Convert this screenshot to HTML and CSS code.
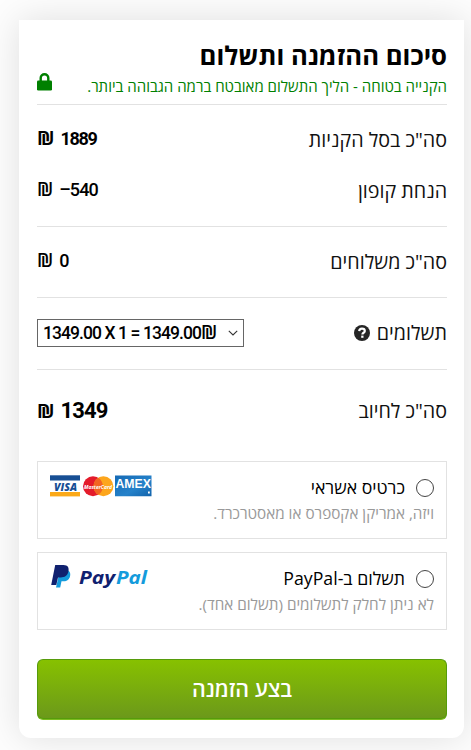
FILE: index.html
```html
<!DOCTYPE html>
<html lang="he" dir="rtl">
<head>
<meta charset="utf-8">
<title>סיכום ההזמנה ותשלום</title>
<link rel="stylesheet" href="styles.css">
</head>
<body>
<main class="card">
  <header class="head">
    <h1>סיכום ההזמנה ותשלום</h1>
    <div class="secure">
      <span>הקנייה בטוחה - הליך התשלום מאובטח ברמה הגבוהה ביותר.</span>
      <svg class="lock" viewBox="0 0 15 18"><path d="M3.700 8V5a3.800 3.800 0 0 1 7.600 0v3" fill="none" stroke="#008000" stroke-width="2.400"/><rect x="0" y="7.500" width="15" height="10" rx="1.300" fill="#008000"/></svg>
    </div>
  </header>
  <section class="group sums">
    <div class="row"><span>סה"כ בסל הקניות</span><span class="price bold" dir="ltr"><i>₪</i> <b>1889</b></span></div>
    <div class="row"><span>הנחת קופון</span><span class="price" dir="ltr"><i>₪</i> <b>–540</b></span></div>
  </section>
  <section class="group shipping"><div class="row"><span>סה"כ משלוחים</span><span class="price" dir="ltr"><i>₪</i> <b>0</b></span></div></section>
  <section class="group payments">
    <div class="row">
      <span class="label"><span>תשלומים</span><svg class="help" viewBox="0 0 16 16"><circle cx="8" cy="8" r="8" fill="#252525"/><path d="M5.200 6.100C5.300 4.400 6.500 3.600 8 3.600c1.700 0 2.800.9 2.800 2.300 0 1.900-2.400 1.800-2.400 3.500" fill="none" stroke="#fff" stroke-width="2.200"/><rect x="7.200" y="10.600" width="2.300" height="2.200" fill="#fff"/></svg></span>
      <div class="select" dir="ltr"><span>1349.00 X 1 = 1349.00<i>₪</i></span><svg class="chev" viewBox="0 0 10 6"><path d="M.8.8 5 5 9.200.8" fill="none" stroke="#333" stroke-width="1.100"/></svg></div>
    </div>
  </section>
  <section class="total row"><span>סה"כ לחיוב</span><span class="price bold" dir="ltr"><i>₪</i> <b>1349</b></span></section>
  <section class="option">
    <div class="choice">
      <div class="pick"><span class="radio"></span><span>כרטיס אשראי</span></div>
      <p>ויזה, אמריקן אקספרס או מאסטרכרד.</p>
    </div>
    <svg class="logos" viewBox="0 0 102 22">
      <defs><linearGradient id="ax" x1="0" y1="0" x2="1" y2="1"><stop offset="0" stop-color="#1569b4"/><stop offset=".6" stop-color="#2582ca"/><stop offset="1" stop-color="#1262aa"/></linearGradient></defs>
      <rect width="30" height="5.200" y=".3" fill="#174f94"/><rect y="17" width="30" height="4.400" fill="#fba918"/>
      <text x="4" y="15.500" textLength="23" lengthAdjust="spacingAndGlyphs" class="visa">VISA</text>
      <circle cx="43" cy="11.300" r="10" fill="#e41b2b"/><circle cx="53.400" cy="11.300" r="10" fill="#fda61c"/><path d="M48.200 2.800a10 10 0 0 1 0 17 10 10 0 0 1 0-17" fill="#f26522"/>
      <text x="34" y="13.800" textLength="28" lengthAdjust="spacingAndGlyphs" class="mc">MasterCard</text>
      <path d="M65 .5h36.500v20.800H65z" fill="url(#ax)"/>
      <text x="65.500" y="13" textLength="35.500" lengthAdjust="spacingAndGlyphs" class="amex">AMEX</text>
      <rect x="98" y="16.500" width="1.800" height="2" fill="#fff"/>
    </svg>
  </section>
  <section class="option">
    <div class="choice">
      <div class="pick"><span class="radio"></span><span>תשלום ב-PayPal</span></div>
      <p>לא ניתן לחלק לתשלומים (תשלום אחד).</p>
    </div>
    <svg class="pp" viewBox="0 0 98 26">
      <path d="M10 6h7c3.500 1 3.800 4.500 2.800 7.200-1.200 3.200-3.800 4.100-6.800 4.100h-1.500l-1.300 6.200H6z" fill="#149bdc"/>
      <path d="M5.200 1h8.300c4.300 0 5.800 2.800 4.900 6.500-.9 4.200-3.700 5.900-7.600 5.900H8L6.300 21H1.200z" fill="#10216f"/>
      <text x="29" y="19.800" textLength="36" lengthAdjust="spacingAndGlyphs" class="ppt pay">Pay</text>
      <text x="66" y="19.800" textLength="31" lengthAdjust="spacingAndGlyphs" class="ppt pal">Pal</text>
    </svg>
  </section>
  <button class="submit">בצע הזמנה</button>
</main>
</body>
</html>
```
FILE: styles.css
```css
* { box-sizing: border-box; }
body { margin: 0; height: 750px; overflow: hidden; background: #fdfdfd; color: #111; font-family: "Open Sans", "Liberation Sans", sans-serif; font-size: 19.700px; }
.card { width: 445px; height: 718px; margin: 20px 7px 0 0; padding: 18px 17px 0 18px; background: #fff; border-radius: 0 0 12px 12px; box-shadow: 0 0 36px rgba(0,0,0,.12); }
span, b, h1, p { white-space: nowrap; }
svg { direction: ltr; }
.head { height: 66px; }
h1 { margin: 0; height: 36px; line-height: 36px; font-size: 25.700px; font-weight: 700; color: #000; }
.secure { height: 24px; display: flex; align-items: center; justify-content: space-between; line-height: 24px; font-size: 15px; color: #008000; }
.secure span { padding-bottom: 1px; }
.lock { width: 15px; height: 18px; margin-bottom: 9px; }
.group { border-top: 1px solid #e2e2e2; display: flex; flex-direction: column; justify-content: center; padding-bottom: 2px; }
.sums { height: 122px; }
.shipping { height: 71px; }
.payments { height: 72px; }
.row { height: 51px; display: flex; align-items: center; justify-content: space-between; }
.price { display: flex; align-items: baseline; gap: 6px; color: #000; line-height: 24px; }
i { font-style: normal; font-family: "Open Sans", sans-serif; font-size: 19px; font-weight: 600; letter-spacing: 0; line-height: 20px; }
.price b { font: 500 18px/24px Roboto, sans-serif; letter-spacing: -.9px; }
.price.bold i { font-size: 19px; font-weight: 700; }
.price.bold b { font-weight: 700; letter-spacing: -1.300px; }
.label { display: flex; align-items: center; gap: 7px; }
.help { width: 16px; height: 16px; }
.select { width: 207px; height: 28px; padding: 0 5px; border: 1px solid #666; display: flex; align-items: center; justify-content: space-between; font: 500 17.500px/24px Roboto, sans-serif; letter-spacing: -.92px; color: #000; }
.chev { width: 10px; height: 6px; }
.total { height: 92px; padding-bottom: 10px; border-top: 1px solid #e2e2e2; }
.total.row .price b { font-size: 22px; letter-spacing: -.9px; }
.option { height: 78px; margin-bottom: 13px; padding: 13px 12px 0; border: 1px solid #e2e2e2; display: flex; justify-content: space-between; align-items: flex-start; }
.pick { height: 25px; line-height: 22px; display: flex; align-items: center; gap: 11px; font-size: 17.700px; font-weight: 500; color: #000; }
.pick span + span { padding-bottom: 1px; }
.radio { width: 18px; height: 18px; border: 1.500px solid #444; border-radius: 50%; }
.choice p { margin: 0; line-height: 26px; font-size: 15.250px; color: #999; }
.logos { width: 102px; height: 22px; }
.pp { width: 98px; height: 26px; margin: -2px 0 0; }
.visa { font: italic 800 11px "Open Sans", sans-serif; fill: #174f94; }
.mc { font: italic 700 6px "Open Sans", sans-serif; fill: #fff; }
.amex { font: 700 12.500px "Liberation Sans", sans-serif; fill: #fff; }
.ppt { font: italic 700 18px "Open Sans", sans-serif; }
.pay { fill: #10216f; }
.pal { fill: #149bdc; }
.submit { display: block; width: 410px; height: 61px; margin-top: 29px; padding: 0 0 3px; border: 1px solid #569b0b; border-bottom-color: #7cbd20; border-radius: 6px; background: linear-gradient(#87c100, #6b981b); box-shadow: inset 0 -1px #569b0b; color: #fff; font: 600 21.400px "Open Sans", sans-serif; }
```
